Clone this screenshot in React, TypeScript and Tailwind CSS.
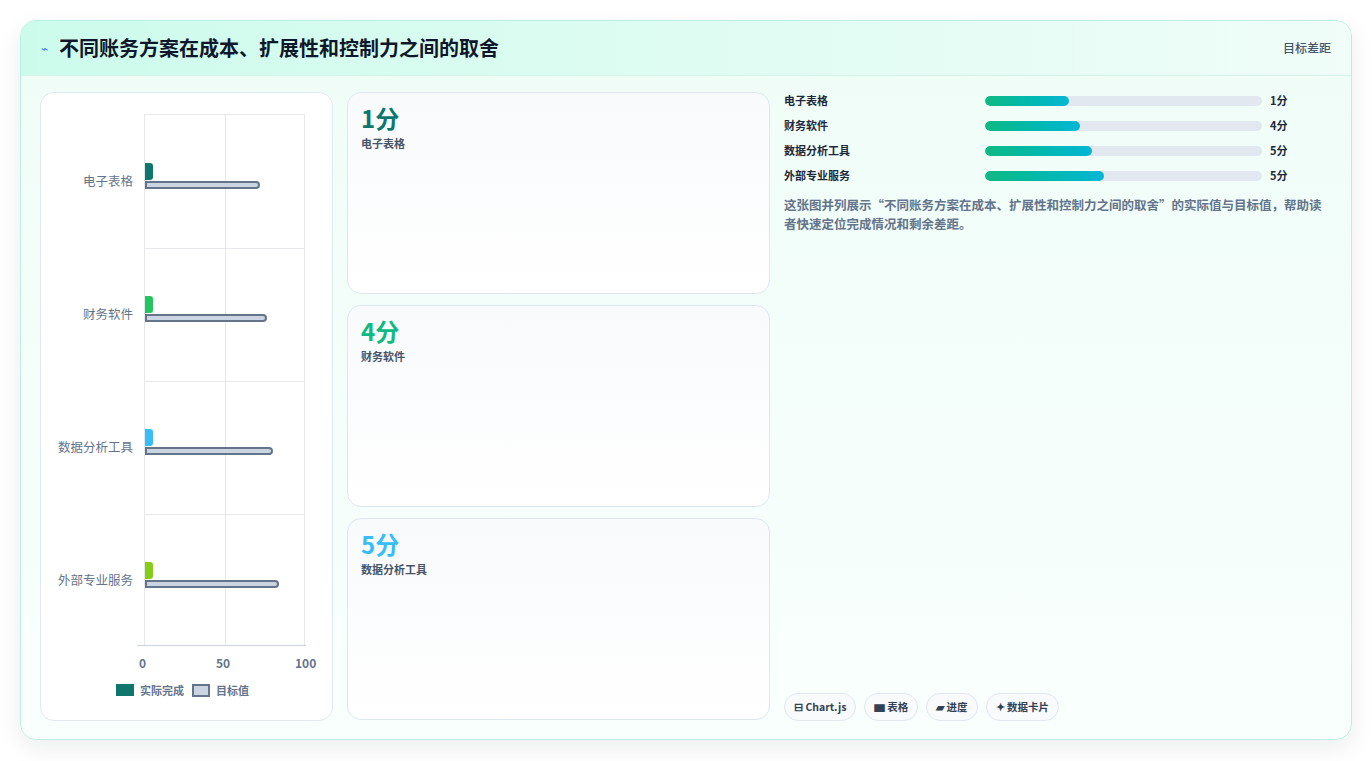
import React from "react";

const rows = [
  { name: "电子表格", v: 1, t: 71.5, c: "#0f766e", w: 84 },
  { name: "财务软件", v: 4, t: 75.5, c: "#22c55e", w: 95 },
  { name: "数据分析工具", v: 5, t: 79.5, c: "#38bdf8", w: 107 },
  { name: "外部专业服务", v: 5, t: 83.5, c: "#84cc16", w: 119 },
];

const cards = [
  { v: "1分", n: "电子表格", c: "#0f766e" },
  { v: "4分", n: "财务软件", c: "#10b981" },
  { v: "5分", n: "数据分析工具", c: "#38bdf8" },
];

export default function App() {
  const font = { fontFamily: '"Noto Sans CJK SC", "Noto Sans", sans-serif' };
  return (
    <div className="w-[1372px] h-[761px] bg-white p-[20px] pb-0" style={font}>
      <div className="h-[720px] rounded-[16px] border border-[#bdeee3] shadow-[0_8px_24px_rgba(15,23,42,0.08)] overflow-hidden flex flex-col bg-gradient-to-b from-[#effdf7] to-[#f9fffd]">
        <div className="h-[55px] shrink-0 flex items-center justify-between px-[20px] bg-gradient-to-r from-[#ccfbec] to-[#f0fdf9] border-b border-[#d5f3ea]">
          <div className="flex items-center gap-[11px]">
            <span className="text-[12px] text-[#3b82f6]">⌁</span>
            <span className="text-[20px] font-bold text-[#0f172a]">不同账务方案在成本、扩展性和控制力之间的取舍</span>
          </div>
          <span className="text-[12px] text-[#475569] font-medium">目标差距</span>
        </div>
        <div className="flex-1 flex gap-[14px] px-[19px] pt-[16px] pb-[18px]">
          <div className="w-[293px] rounded-[14px] border border-[#e2e8f0] bg-white relative">
            <div className="absolute left-[103px] top-[21px] w-[161px] h-[532px] border-l border-t border-r border-[#e5e7eb]">
              <div className="absolute left-[80px] top-0 bottom-0 border-l border-[#e5e7eb]" />
              {rows.map((r, i) => (
                <div key={r.name} className="absolute left-0 right-0 h-[133px]" style={{ top: i * 133 }}>
                  {i > 0 && <div className="absolute left-0 right-0 top-0 border-t border-[#e5e7eb]" />}
                  <div className="absolute right-[171px] top-[57px] whitespace-nowrap text-[12.5px] text-[#64748b]">{r.name}</div>
                  <div className="absolute left-0 top-[48px] h-[17px] rounded-r-[3px]" style={{ width: 8, background: r.c }} />
                  <div className="absolute left-0 top-[66px] h-[8px] rounded-r-[4px] bg-[#cbd5e1] border-2 border-[#64748b]" style={{ width: r.t * 1.61 }} />
                </div>
              ))}
              <div className="absolute left-[-8px] right-[-2px] bottom-0 border-b border-[#cbd5e1]" />
            </div>
            <div className="absolute top-[561px] left-[98px] text-[12px] font-bold text-[#64748b]">0</div>
            <div className="absolute top-[561px] left-[175px] text-[12px] font-bold text-[#64748b]">50</div>
            <div className="absolute top-[561px] left-[254px] text-[12px] font-bold text-[#64748b]">100</div>
            <div className="absolute top-[589px] left-[75px] flex items-center gap-[6px] text-[11px] font-bold text-[#64748b]">
              <span className="w-[18px] h-[12px] bg-[#0f766e]" />
              <span>实际完成</span>
              <span className="w-[18px] h-[13px] bg-[#cbd5e1] border-2 border-[#64748b] ml-[2px]" />
              <span>目标值</span>
            </div>
          </div>
          <div className="w-[423px] flex flex-col gap-[11px]">
            {cards.map((c) => (
              <div key={c.n} className="h-[202px] rounded-[14px] border border-[#dde7f0] bg-gradient-to-b from-[#f8fafc] to-white px-[13px] pt-[9px]">
                <div className="text-[24px] font-bold leading-[32px]" style={{ color: c.c }}>{c.v}</div>
                <div className="text-[11px] font-bold text-[#475569] mt-[1px]">{c.n}</div>
              </div>
            ))}
          </div>
          <div className="flex-1 flex flex-col">
            <div className="flex flex-col gap-[8px]">
              {rows.map((r) => (
                <div key={r.name} className="flex items-center h-[17px]">
                  <span className="w-[201px] text-[11px] font-bold text-[#1e293b]">{r.name}</span>
                  <div className="w-[277px] h-[10px] rounded-full bg-[#e2e8f0] overflow-hidden">
                    <div className="h-full rounded-full bg-gradient-to-r from-[#10b981] to-[#06b6d4]" style={{ width: r.w }} />
                  </div>
                  <span className="ml-[8px] text-[11px] font-bold text-[#1e293b]">{r.v}分</span>
                </div>
              ))}
            </div>
            <p className="mt-[11px] text-[12.5px] leading-[19px] font-bold text-[#64748b] pr-[10px]">
              这张图并列展示“不同账务方案在成本、扩展性和控制力之间的取舍”的实际值与目标值，帮助读者快速定位完成情况和剩余差距。
            </p>
            <div className="mt-auto flex gap-[8px]">
              {["⊟ Chart.js", "▆ 表格", "▰ 进度", "✦ 数据卡片"].map((t) => (
                <span key={t} className="h-[28px] px-[9px] rounded-full border border-[#e2e8f0] bg-[#f8fafc] flex items-center text-[10.5px] font-bold text-[#334155]">{t}</span>
              ))}
            </div>
          </div>
        </div>
      </div>
    </div>
  );
}
